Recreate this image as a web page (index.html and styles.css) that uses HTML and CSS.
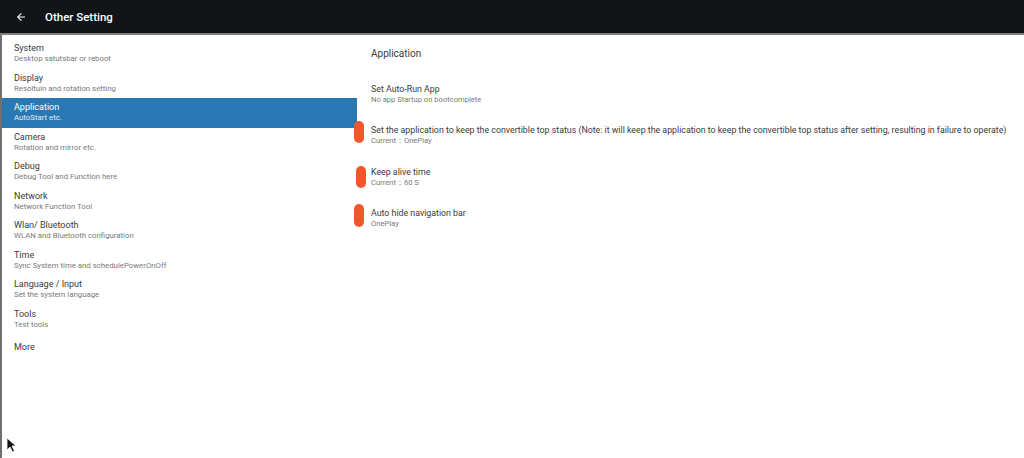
FILE: index.html
```html
<!DOCTYPE html>
<html lang="en">
<head>
    <meta charset="UTF-8">
    <title>Other Setting</title>
    <link rel="stylesheet" href="styles.css">
</head>
<body>
<div class="topbar">
    <svg class="back" width="12" height="12" viewBox="0 0 24 24">
        <path d="M20 11H7.8l5.6-5.6L12 4l-8 8 8 8 1.4-1.4L7.8 13H20z" fill="#fff"/>
    </svg>
    <span class="topbar-title">Other Setting</span>
</div>
<div class="main">
    <ul class="menu">
        <li class="menu-item"><p class="t">System</p><p class="s">Desktop satutsbar or reboot</p></li>
        <li class="menu-item"><p class="t">Display</p><p class="s">Resoltuin and rotation setting</p></li>
        <li class="menu-item active"><p class="t">Application</p><p class="s">AutoStart etc.</p></li>
        <li class="menu-item"><p class="t">Camera</p><p class="s">Rotation and mirror etc.</p></li>
        <li class="menu-item"><p class="t">Debug</p><p class="s">Debug Tool and Function here</p></li>
        <li class="menu-item"><p class="t">Network</p><p class="s">Network Function Tool</p></li>
        <li class="menu-item"><p class="t">Wlan/ Bluetooth</p><p class="s">WLAN and Bluetooth configuration</p></li>
        <li class="menu-item"><p class="t">Time</p><p class="s">Sync System time and schedulePowerOnOff</p></li>
        <li class="menu-item"><p class="t">Language / Input</p><p class="s">Set the system language</p></li>
        <li class="menu-item"><p class="t">Tools</p><p class="s">Test tools</p></li>
        <li class="menu-item single"><p class="t">More</p></li>
    </ul>
    <div class="panel">
        <h2 class="panel-title">Application</h2>
        <div class="pref"><p class="t">Set Auto-Run App</p><p class="s">No app Startup on bootcomplete</p></div>
        <div class="pref"><span class="touch" style="top:-3px"></span><p class="t">Set the application to keep the convertible top status (Note: it will keep the application to keep the convertible top status after setting, resulting in failure to operate)</p><p class="s">Current：OnePlay</p></div>
        <div class="pref"><span class="touch" style="top:0;left:-15px"></span><p class="t">Keep alive time</p><p class="s">Current：60 S</p></div>
        <div class="pref"><span class="touch" style="top:-3px;height:23px"></span><p class="t">Auto hide navigation bar</p><p class="s">OnePlay</p></div>
    </div>
</div>
<svg class="cursor" width="10" height="16" viewBox="0 0 10 16">
    <path d="M1 1v12l3-3 2.5 5 2-1-2.5-5H10z" fill="#111" stroke="#fff" stroke-width="0.8"/>
</svg>
</body>
</html>
```

FILE: styles.css
```css
*{
    margin: 0;
    padding: 0;
    list-style-type: none;
    box-sizing: border-box;
}
body{
    width: 1024px;
    height: 458px;
    overflow: hidden;
    background: #fff;
    font-family: Roboto, "Noto Sans", sans-serif;
    position: relative;
}
/*顶部标题栏*/
.topbar{
    height: 35px;
    background: #111518;
    border-bottom: 2px solid #7d7d7d;
    display: flex;
    align-items: center;
    padding-left: 15px;
}
.back{
    margin-right: 18px;
}
.topbar-title{
    color: #fff;
    font-size: 11.5px;
    font-weight: 500;
}
.main{
    display: flex;
    height: 423px;
    border-left: 2px solid #707070;
}
/*左侧菜单*/
.menu{
    width: 355px;
    padding-top: 4px;
}
.menu-item{
    height: 29.5px;
    padding: 3px 12px;
    color: #3a3a3a;
}
.menu-item.single{
    padding-top: 7px;
}
.menu-item.active{
    background: #2a78b3;
    color: #fff;
}
.t{
    font-size: 9px;
    line-height: 12px;
    white-space: nowrap;
}
.s{
    font-size: 7.8px;
    line-height: 10px;
    color: #7a7a7a;
    white-space: nowrap;
}
.active .s{
    color: #e6eef6;
}
/*右侧内容*/
.panel{
    flex: 1;
    padding: 12px 0 0 14px;
}
.panel-title{
    font-size: 10px;
    font-weight: normal;
    line-height: 14px;
    color: #3a3a3a;
    margin-bottom: 22px;
}
.pref{
    position: relative;
    height: 41.3px;
    color: #3a3a3a;
}
.pref .t{
    font-size: 8.8px;
}
.pref .s{
    font-size: 7.6px;
}
/*触摸点*/
.touch{
    position: absolute;
    left: -17px;
    width: 10px;
    height: 22px;
    border-radius: 5px;
    background: #f4562b;
}
.cursor{
    position: absolute;
    left: 6px;
    top: 437px;
}
```
